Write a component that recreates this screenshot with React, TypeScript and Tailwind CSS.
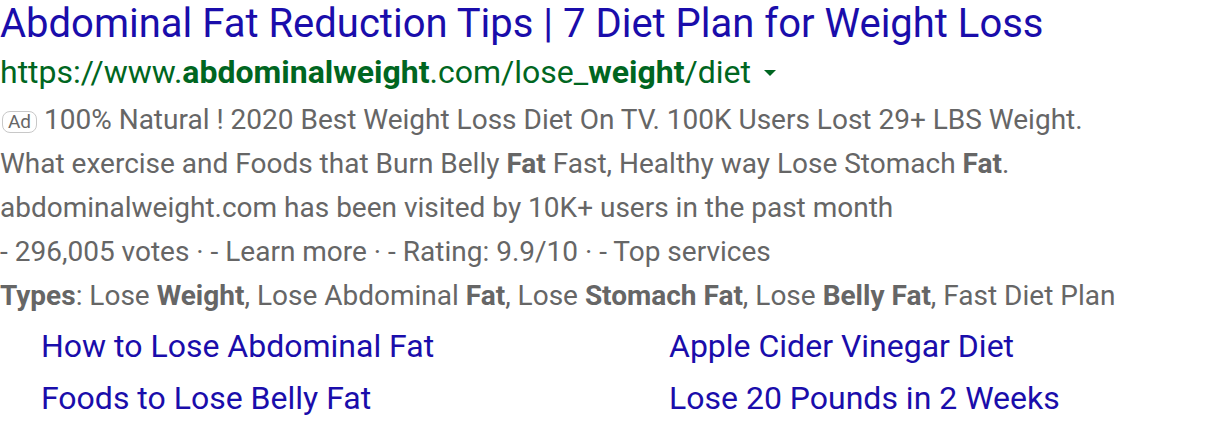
export default function App() {
  return (
    <div className="h-[430px] w-[1216px] overflow-hidden bg-white font-['Roboto',sans-serif]">
      <h3 className="text-[40px] leading-[48px] text-[#1a0dab]">
        Abdominal Fat Reduction Tips | 7 Diet Plan for Weight Loss
      </h3>
      <div className="flex items-center text-[32px] leading-[48px] text-[#006621]">
        <span>
          https://www.<b className="font-bold">abdominalweight</b>.com/lose_<b className="font-bold">weight</b>/diet
        </span>
        <span className="ml-[13px] mt-[2px] h-0 w-0 border-x-[6px] border-t-[6px] border-x-transparent border-t-[#006621]" />
      </div>
      <div className="mt-[2px] text-[28px] leading-[44px] text-[#666]">
        <div className="flex items-center">
          <span className="ml-[2px] mr-[7px] mt-[3px] inline-flex h-[22px] w-[35px] items-center justify-center rounded-[8px] border border-[#c8c8c8] text-[19px] leading-none">
            Ad
          </span>
          <span>100% Natural ! 2020 Best Weight Loss Diet On TV. 100K Users Lost 29+ LBS Weight.</span>
        </div>
        <div>
          What exercise and Foods that Burn Belly <b className="font-bold">Fat</b> Fast, Healthy way Lose Stomach{" "}
          <b className="font-bold">Fat</b>.
        </div>
        <div>abdominalweight.com has been visited by 10K+ users in the past month</div>
        <div>- 296,005 votes · - Learn more · - Rating: 9.9/10 · - Top services</div>
        <div>
          <b className="font-bold">Types</b>: Lose <b className="font-bold">Weight</b>, Lose Abdominal{" "}
          <b className="font-bold">Fat</b>, Lose <b className="font-bold">Stomach Fat</b>, Lose{" "}
          <b className="font-bold">Belly Fat</b>, Fast Diet Plan
        </div>
      </div>
      <div className="mt-[2px] grid grid-cols-[628px_1fr] pl-[41px] text-[32px] leading-[52px] text-[#1a0dab]">
        <a>How to Lose Abdominal Fat</a>
        <a>Apple Cider Vinegar Diet</a>
        <a>Foods to Lose Belly Fat</a>
        <a>Lose 20 Pounds in 2 Weeks</a>
      </div>
    </div>
  );
}
